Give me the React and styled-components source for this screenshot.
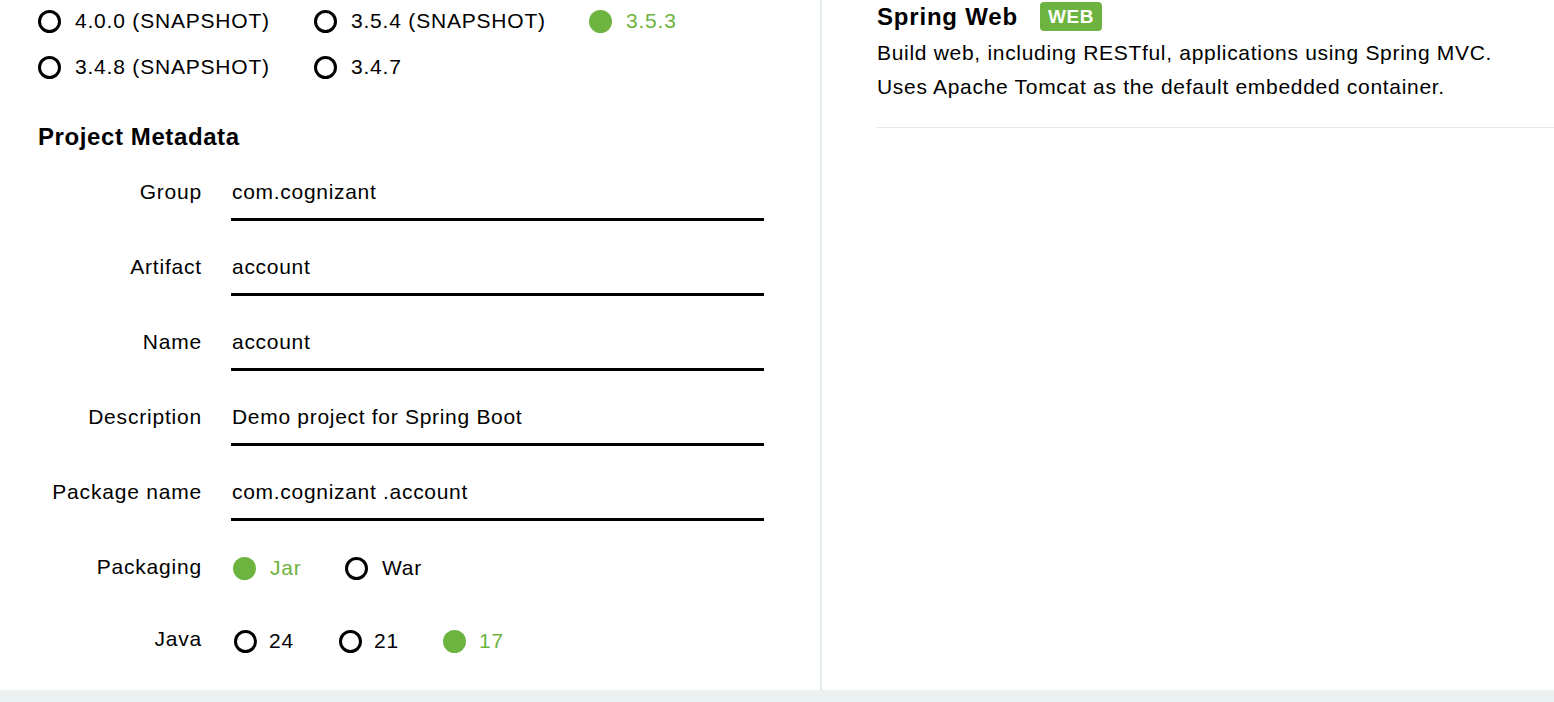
import React from "react";
import styled, { createGlobalStyle } from "styled-components";

const GREEN = "#6db33f";

const GlobalStyle = createGlobalStyle`
  html, body {
    margin: 0;
    padding: 0;
    background: #fff;
  }
  body {
    font-family: "Liberation Sans", Arial, sans-serif;
    color: #000;
    overflow: hidden;
  }
`;

const Page = styled.div`
  width: 1554px;
  height: 702px;
  display: flex;
  flex-direction: column;
  overflow: hidden;
`;

const Columns = styled.div`
  display: flex;
  height: 690px;
`;

const Left = styled.div`
  width: 822px;
  flex: none;
  border-right: 2px solid #e3ebeb;
  padding: 9px 0 0 38px;
  box-sizing: border-box;
`;

const Right = styled.div`
  flex: 1;
  padding: 2px 0 0 55px;
`;

const Footer = styled.div`
  height: 12px;
  background: #ebf1f1;
`;

const RadioGrid = styled.div`
  display: grid;
  grid-template-columns: 276px 275px 276px;
  row-gap: 22px;
`;

const RadioRow = styled.div`
  display: flex;
  margin-left: ${(p) => p.$offset || "0px"};
`;

const Radio = styled.label`
  display: flex;
  align-items: center;
  font-size: 21px;
  line-height: 24px;
  letter-spacing: 0.8px;
  color: ${(p) => (p.$checked ? GREEN : "#000")};
  width: ${(p) => p.$width || "auto"};
  padding-top: ${(p) => p.$top || "0px"};
`;

const Dot = styled.span`
  width: 23px;
  height: 23px;
  box-sizing: border-box;
  border-radius: 50%;
  flex: none;
  margin-right: ${(p) => p.$space || "14px"};
  border: ${(p) => (p.$checked ? "none" : "3px solid #000")};
  background: ${(p) => (p.$checked ? GREEN : "transparent")};
`;

const Heading = styled.h2`
  margin: 43px 0 24px;
  font-size: 24px;
  font-weight: bold;
  letter-spacing: 0.6px;
  line-height: 30px;
`;

const Fields = styled.div`
  display: flex;
  flex-direction: column;
  margin-left: -38px;
`;

const Field = styled.div`
  display: grid;
  grid-template-columns: 202px 533px;
  column-gap: 29px;
  align-items: start;
  height: ${(p) => p.$h || "75px"};
`;

const Label = styled.div`
  text-align: right;
  font-size: 21px;
  line-height: 24px;
  padding-top: 4px;
  letter-spacing: 0.8px;
`;

const Input = styled.div`
  font-size: 21px;
  line-height: 24px;
  padding: 4px 0 14px 1px;
  border-bottom: 3px solid #000;
  letter-spacing: 0.7px;
`;

const Title = styled.div`
  display: flex;
  align-items: center;
  gap: 22px;
  font-size: 24px;
  font-weight: bold;
  letter-spacing: 0.8px;
`;

const Badge = styled.span`
  background: ${GREEN};
  color: #fff;
  font-size: 19px;
  font-weight: bold;
  border-radius: 4px;
  padding: 3px 8px;
  line-height: 23px;
  letter-spacing: 0.6px;
`;

const Desc = styled.p`
  margin: 5px 0 0;
  font-size: 21px;
  line-height: 34px;
  letter-spacing: 0.7px;
  padding-bottom: 23px;
  border-bottom: 1px solid #e3e8e8;
`;

const versions = [
  ["4.0.0 (SNAPSHOT)", false],
  ["3.5.4 (SNAPSHOT)", false],
  ["3.5.3", true],
  ["3.4.8 (SNAPSHOT)", false],
  ["3.4.7", false],
];

const fields = [
  ["Group", "com.cognizant"],
  ["Artifact", "account"],
  ["Name", "account"],
  ["Description", "Demo project for Spring Boot"],
  ["Package name", "com.cognizant .account"],
];

export default function App() {
  return (
    <Page>
      <GlobalStyle />
      <Columns>
        <Left>
          <RadioGrid>
            {versions.map(([v, c]) => (
              <Radio key={v} $checked={c}>
                <Dot $checked={c} />
                {v}
              </Radio>
            ))}
          </RadioGrid>
          <Heading>Project Metadata</Heading>
          <Fields>
            {fields.map(([l, v]) => (
              <Field key={l}>
                <Label>{l}</Label>
                <Input>{v}</Input>
              </Field>
            ))}
            <Field $h="72px">
              <Label>Packaging</Label>
              <RadioRow $offset="2px">
                <Radio $checked $width="112px" $top="5px">
                  <Dot $checked />
                  Jar
                </Radio>
                <Radio $top="5px">
                  <Dot />
                  War
                </Radio>
              </RadioRow>
            </Field>
            <Field $h="60px">
              <Label>Java</Label>
              <RadioRow $offset="3px">
                <Radio $width="105px" $top="6px">
                  <Dot $space="12px" />
                  24
                </Radio>
                <Radio $width="104px" $top="6px">
                  <Dot $space="12px" />
                  21
                </Radio>
                <Radio $checked $top="6px">
                  <Dot $checked $space="13px" />
                  17
                </Radio>
              </RadioRow>
            </Field>
          </Fields>
        </Left>
        <Right>
          <Title>
            Spring Web
            <Badge>WEB</Badge>
          </Title>
          <Desc>
            Build web, including RESTful, applications using Spring MVC.
            <br />
            Uses Apache Tomcat as the default embedded container.
          </Desc>
        </Right>
      </Columns>
      <Footer />
    </Page>
  );
}
